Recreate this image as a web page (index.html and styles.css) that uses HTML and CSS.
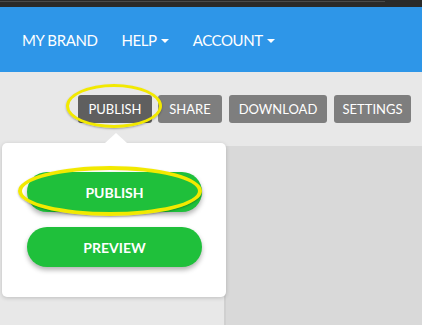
FILE: index.html
```html
<!DOCTYPE html>
<html>
<head>
<meta charset="utf-8">
<link rel="stylesheet" href="styles.css">
</head>
<body>
<div class="topbar"><div class="topline"></div></div>
<nav class="nav">
  <span class="nav-item brand">MY BRAND</span>
  <span class="nav-item">HELP <i class="caret"></i></span>
  <span class="nav-item">ACCOUNT <i class="caret"></i></span>
</nav>
<div class="main">
  <div class="toolbar">
    <button class="tbtn active w-publish">PUBLISH</button>
    <button class="tbtn w-share">SHARE</button>
    <button class="tbtn w-download">DOWNLOAD</button>
    <button class="tbtn w-settings">SETTINGS</button>
  </div>
  <div class="workspace">
    <div class="sidebar"></div>
    <div class="canvas"></div>
  </div>
  <div class="ring ring-top"></div>
  <div class="popover">
    <div class="arrow"></div>
    <button class="gbtn">PUBLISH</button>
    <button class="gbtn">PREVIEW</button>
  </div>
  <div class="ring ring-pop"></div>
</div>
</body>
</html>
```
FILE: styles.css
```css
* { box-sizing: border-box; }
html, body { margin: 0; padding: 0; }
body {
  width: 422px;
  height: 325px;
  overflow: hidden;
  font-family: Lato, "Open Sans", sans-serif;
  background: #e8e8e8;
}
.topbar {
  height: 7px;
  background: #2a2a2a;
  padding-top: 1px;
}
.topline {
  width: 385px;
  height: 1px;
  background: #4a4a4a;
}
.nav {
  height: 65px;
  background: #2e96e8;
  display: flex;
  align-items: center;
  padding-left: 22px;
  gap: 24px;
}
.nav-item {
  color: #fff;
  font-size: 15px;
  letter-spacing: -0.4px;
  display: flex;
  align-items: center;
  gap: 4px;
}
.caret {
  display: inline-block;
  width: 0;
  height: 0;
  border-left: 4px solid transparent;
  border-right: 4px solid transparent;
  border-top: 4px solid #fff;
  margin-top: 2px;
}
.main {
  position: relative;
  height: 253px;
  display: flex;
  flex-direction: column;
}
.toolbar {
  height: 74px;
  display: flex;
  justify-content: flex-end;
  align-items: flex-start;
  padding: 23px 11px 0 0;
  gap: 7px;
}
.tbtn {
  height: 28px;
  border: none;
  border-radius: 3px;
  background: #7e7e7e;
  color: #fff;
  font-family: Lato, "Open Sans", sans-serif;
  font-size: 13px;
  padding: 0;
  margin: 0;
  text-align: center;
}
.tbtn.active {
  background: #5f5f5f;
  margin-right: -1px;
}
.w-publish { width: 74px; }
.w-share { width: 64px; }
.w-download { width: 98px; }
.w-settings { width: 77px; }
.workspace {
  flex: 1;
  display: flex;
}
.sidebar {
  width: 226px;
  background: #e8e8e8;
  border-right: 2px solid #d0d0d0;
}
.canvas {
  flex: 1;
  background: #d9d9d9;
}
.popover {
  position: absolute;
  left: 2px;
  top: 71px;
  width: 224px;
  height: 154px;
  background: #fff;
  border-radius: 5px;
  box-shadow: 0 1px 4px rgba(0,0,0,0.18);
  display: flex;
  flex-direction: column;
  align-items: flex-start;
  padding: 29px 0 0 25px;
  gap: 15px;
}
.arrow {
  position: absolute;
  left: 103px;
  top: -10px;
  width: 0;
  height: 0;
  border-left: 11px solid transparent;
  border-right: 11px solid transparent;
  border-bottom: 10px solid #fff;
}
.gbtn {
  width: 175px;
  height: 40px;
  border: none;
  border-radius: 20px;
  background: #1fc03b;
  color: #fff;
  font-family: Lato, "Open Sans", sans-serif;
  font-weight: bold;
  font-size: 14px;
  box-shadow: 0 3px 5px rgba(0,0,0,0.3);
  margin: 0;
}
.ring {
  position: absolute;
  border: 3px solid #f2e900;
  border-radius: 50%;
  box-shadow: 0 1px 2px rgba(0,0,0,0.3);
}
.ring-top {
  left: 66px;
  top: 12px;
  width: 96px;
  height: 44px;
}
.ring-pop {
  left: 18px;
  top: 94px;
  width: 184px;
  height: 50px;
  border-width: 4px;
}
```
